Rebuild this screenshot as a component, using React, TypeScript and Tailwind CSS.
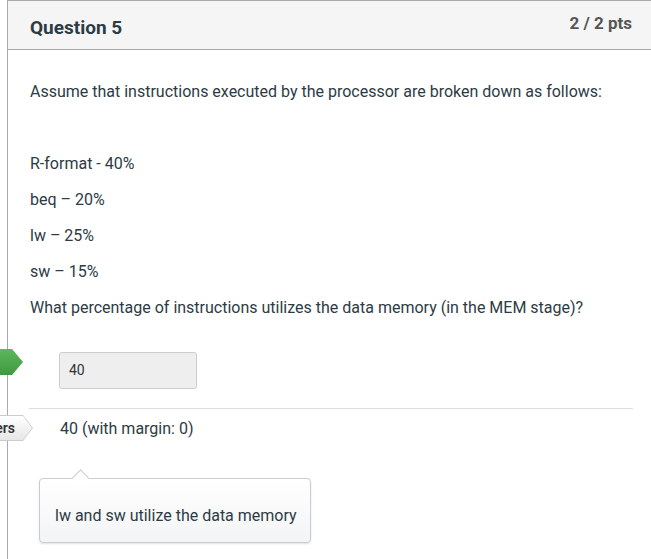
import React from 'react';

const lines = ['R-format - 40%', 'beq \u2013 20%', 'lw \u2013 25%', 'sw \u2013 15%'];

const App: React.FC = () => {
  return (
    <div className="w-[651px] h-[559px] bg-white overflow-hidden font-['Roboto',_sans-serif] text-[#2d3b45]">
      <div className="relative ml-[7px] w-[644px] h-[600px] border-l border-t border-[#aaaaaa]">
        {/* Header */}
        <div className="h-[49px] bg-[#f5f5f5] border-b border-[#aaaaaa] flex justify-between pl-[22px] pr-[19px]">
          <h2 className="pt-[15px] text-[19px] leading-6 font-bold text-[#2d3b45]">Question 5</h2>
          <div className="pt-[10px] text-[17px] leading-6 font-bold text-[#555555]">2 / 2 pts</div>
        </div>

        {/* Question body */}
        <div className="pt-[30px] pl-[22px] text-[16px] leading-6">
          <p className="mb-3">Assume that instructions executed by the processor are broken down as follows:</p>
          <p className="mb-3 h-6"></p>
          {lines.map(l => (
            <p key={l} className="mb-3">{l}</p>
          ))}
          <p className="mb-3">What percentage of instructions utilizes the data memory (in the MEM stage)?</p>
        </div>

        {/* Correct answer row */}
        <div className="relative pt-[20px] pl-[51px]">
          <div className="absolute left-[-49px] top-[17px] w-[64px] h-[26px] bg-gradient-to-b from-[#5cb85c] to-[#3f9a3f] [clip-path:polygon(0_0,53px_0,64px_50%,53px_100%,0_100%)]"></div>
          <div className="w-[138px] h-[37px] bg-[#eeeeee] border border-[#cccccc] rounded-[3px] pl-[9px] flex items-center text-[14px] text-[#333333]">
            40
          </div>
        </div>

        {/* Separator + margin answer */}
        <div className="relative mt-[19px] ml-[21px] mr-[18px] border-t border-[#dddddd] pt-[8px] pl-[31px] text-[16px] leading-6">
          <div className="absolute left-[-92px] top-[6px] w-[96px] h-[26px]">
            <div className="absolute inset-0 bg-[#cccccc] [clip-path:polygon(0_0,86px_0,96px_50%,86px_100%,0_100%)]"></div>
            <div className="absolute inset-[1px] bg-gradient-to-b from-white to-[#e6e6e6] flex items-center justify-end pr-[17px] text-[14px] font-semibold text-[#333333] [clip-path:polygon(0_0,85px_0,94px_50%,85px_100%,0_100%)]">
              Answers
            </div>
          </div>
          40 (with margin: 0)
        </div>

        {/* Comment tooltip */}
        <div className="relative mt-[37px] ml-[31px] w-[272px] h-[65px] rounded-[4px] border border-[#c7cdd1] bg-gradient-to-b from-white to-[#f3f4f5] shadow-[0_1px_2px_rgba(0,0,0,0.12)] pt-[25px] pl-[15px] text-[16px] leading-6 text-[#2d3b45]">
          <div className="absolute left-[34px] top-[-7px] w-[13px] h-[13px] rotate-45 bg-white border-l border-t border-[#c7cdd1]"></div>
          <span className="relative">lw and sw utilize the data memory</span>
        </div>
      </div>
    </div>
  );
};

export default App;
